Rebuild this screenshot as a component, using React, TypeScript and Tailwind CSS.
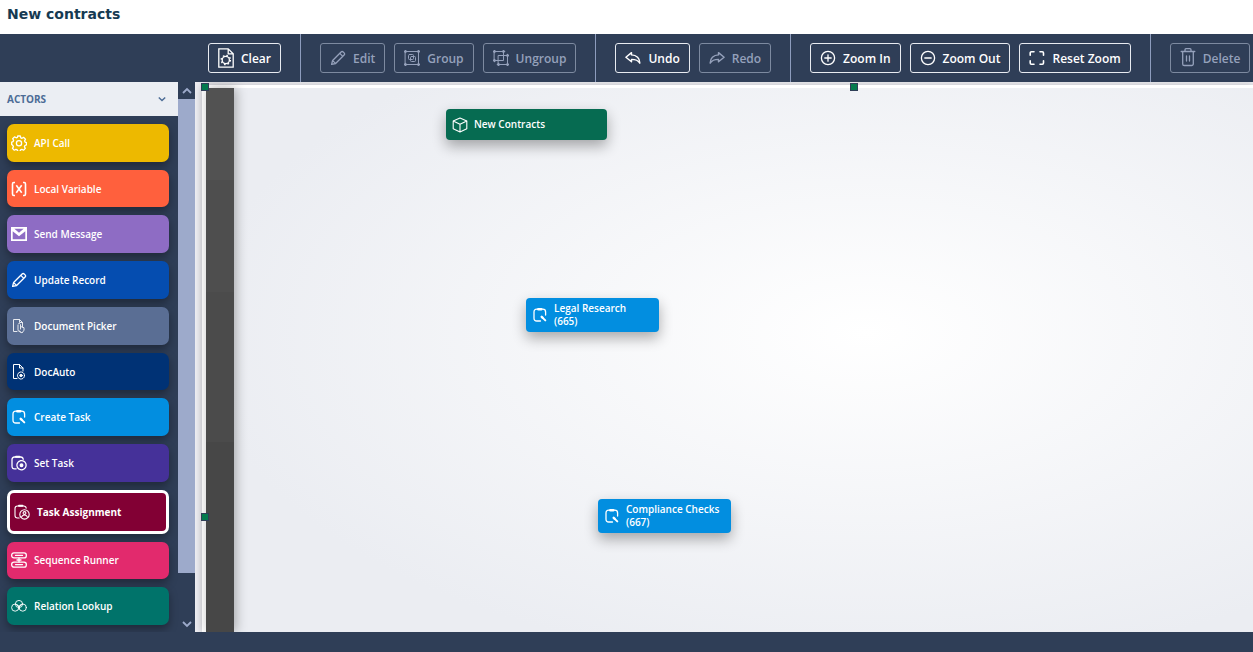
import React from "react";

type IconProps = { className?: string };

const stroke = {
  fill: "none",
  stroke: "currentColor",
  strokeWidth: 1.3,
  strokeLinecap: "round" as const,
  strokeLinejoin: "round" as const,
  "aria-hidden": true,
};

const cog =
  "M6.7 1h2.6l.5 1.8 1.2.5 1.7-.9 1.8 1.8-.9 1.7.5 1.2 1.4.5v2.3l-1.6.6-.5 1.2.9 1.7-1.8 1.8-1.7-.9-1.2.5-.5 1.7H6.7l-.5-1.7-1.2-.5-1.7.9-1.8-1.8.9-1.7-.5-1.2L.7 9.4V7.1l1.4-.5.5-1.2-.9-1.7 1.8-1.8 1.7.9 1.2-.5z";

function ClearIcon({ className }: IconProps) {
  return (
    <svg viewBox="0 0 16 20" className={className} {...stroke} strokeLinecap="butt" strokeLinejoin="miter">
      <path d="M.8.8h9.4l5 5v13.4H.8zM10.2.8v5h5" />
      <circle cx="7.8" cy="12" r="3.6" />
      <circle cx="7.8" cy="12" r="4.6" strokeWidth="1.4" strokeDasharray="1.6 2.01" />
    </svg>
  );
}

function PencilIcon({ className }: IconProps) {
  return (
    <svg viewBox="0 0 16 16" className={className} {...stroke} strokeWidth={1.3}>
      <path d="M1.6 14.4l1-3.9 8.5-8.5a1.5 1.5 0 0 1 2.1 0l.9.9a1.5 1.5 0 0 1 0 2.1l-8.5 8.5zM9.8 3.4l3 3M2.7 10.6l2.8 2.8" />
    </svg>
  );
}

function GroupIcon({ className }: IconProps) {
  return (
    <svg viewBox="0 0 16 16" className={className} {...stroke} strokeWidth={1}>
      <path d="M1.5 1.5h13v13h-13z" />
      <path d="M.5 1.5h2M1.5.5v2M13.5 1.5h2M14.5.5v2M.5 14.5h2M1.5 13.5v2M13.5 14.5h2M14.5 13.5v2" strokeWidth="1.6" />
      <rect x="4.5" y="4.5" width="5" height="5" rx="1" />
      <rect x="6.5" y="6.5" width="5" height="5" rx="1" />
    </svg>
  );
}

function UngroupIcon({ className }: IconProps) {
  return (
    <svg viewBox="0 0 16 16" className={className} {...stroke} strokeWidth={1}>
      <path d="M1.5 1.5h9v9h-9zM5.5 5.5h9v9h-9z" />
      <path d="M.5 1.5h2M1.5.5v2M9.5 1.5h2M10.5.5v2M.5 10.5h2M1.5 9.5v2M13.5 5.5h2M14.5 4.5v2M13.5 14.5h2M14.5 13.5v2M4.5 14.5h2M5.5 13.5v2" strokeWidth="1.6" />
    </svg>
  );
}

function UndoIcon({ className }: IconProps) {
  return (
    <svg viewBox="0 0 16 16" className={className} {...stroke} strokeWidth={1.4}>
      <path d="M6.5 2.6L.9 7.2l5.6 4.6V9.4c4 0 6.5.8 8.3 3.8.2-4.5-3.3-8.3-8.3-8.3z" />
    </svg>
  );
}

function RedoIcon({ className }: IconProps) {
  return (
    <svg viewBox="0 0 16 16" className={className} {...stroke} strokeWidth={1.4}>
      <path d="M9.5 2.6l5.6 4.6-5.6 4.6V9.4c-4 0-6.5.8-8.3 3.8-.2-4.5 3.3-8.3 8.3-8.3z" />
    </svg>
  );
}

function ZoomInIcon({ className }: IconProps) {
  return (
    <svg viewBox="0 0 16 16" className={className} {...stroke}>
      <circle cx="8" cy="8" r="6.6" />
      <path d="M4.8 8h6.4M8 4.8v6.4" />
    </svg>
  );
}

function ZoomOutIcon({ className }: IconProps) {
  return (
    <svg viewBox="0 0 16 16" className={className} {...stroke}>
      <circle cx="8" cy="8" r="6.6" />
      <path d="M4.8 8h6.4" />
    </svg>
  );
}

function ResetIcon({ className }: IconProps) {
  return (
    <svg viewBox="0 0 16 16" className={className} {...stroke} strokeWidth={1.6}>
      <path d="M1.2 5.3V3a1.2 1.2 0 0 1 1.2-1.2H5M11 1.8h2.3A1.2 1.2 0 0 1 14.5 3v2.3M14.5 10.7V13a1.2 1.2 0 0 1-1.2 1.2H11M5 14.2H2.4A1.2 1.2 0 0 1 1.2 13v-2.3" />
    </svg>
  );
}

function TrashIcon({ className }: IconProps) {
  return (
    <svg viewBox="0 0 16 20" className={className} {...stroke}>
      <path d="M1.2 3.5h13.6M5 3.5V1.7A1 1 0 0 1 6 .7h4a1 1 0 0 1 1 1v1.8M2.7 3.5v12.4a1.6 1.6 0 0 0 1.6 1.6h7.4a1.6 1.6 0 0 0 1.6-1.6V3.5M6.5 8v5M9.5 8v5" />
    </svg>
  );
}

function GearIcon({ className }: IconProps) {
  return (
    <svg viewBox="0 0 16 16" className={className} {...stroke} strokeWidth={1.3}>
      <path d={cog} />
      <circle cx="8" cy="8.2" r="2.6" />
    </svg>
  );
}

function VariableIcon({ className }: IconProps) {
  return (
    <svg viewBox="0 0 16 16" className={className} {...stroke} strokeWidth={1.6} strokeLinecap="butt">
      <path d="M4 1.5H2.8Q1.5 1.5 1.5 3v10q0 1.5 1.3 1.5H4M12 1.5h1.2q1.3 0 1.3 1.5v10q0 1.5-1.3 1.5H12" />
      <path d="M5.3 4.3l5.4 7.4M10.7 4.3l-5.4 7.4" />
    </svg>
  );
}

function MailIcon({ className }: IconProps) {
  return (
    <svg viewBox="0 0 16 16" className={className} aria-hidden>
      <path fillRule="evenodd" fill="currentColor" d="M0 1h16v14H0zM1.7 5.2v8h12.6v-8L8 10.2z" />
      <path fill="#8e6cc4" d="M3.4 2.7h9.2L8 6.7z" />
    </svg>
  );
}

function DocPickIcon({ className }: IconProps) {
  return (
    <svg viewBox="0 0 16 16" className={className} {...stroke} strokeWidth={1} opacity={0.85}>
      <path d="M6 13.5H2.5v-12h6l3 3V9M8.5 1.5v3h3" />
      <path d="M9.5 11V6.5Q9 5 7.6 5.6M7 7v5.5l2.5 1.8M9.5 8.5l3.5 1.2v2.500l-2 2.800-2.500-2" />
    </svg>
  );
}

function DocAutoIcon({ className }: IconProps) {
  return (
    <svg viewBox="0 0 16 16" className={className} {...stroke} strokeWidth={1}>
      <path d="M6 14.5H2.5v-14h6L12 4v3M8.5.5V4H12" />
      <circle cx="10" cy="11.5" r="3.5" strokeDasharray="1.6 .6" />
      <circle cx="10" cy="11.5" r="1.2" fill="currentColor" />
    </svg>
  );
}

function TaskIcon({ className }: IconProps) {
  return (
    <svg viewBox="0 0 16 16" className={className} {...stroke}>
      <path d="M8.5 14H4.8Q2 14 2 11.2V5q0-2.8 2.8-2.8h6Q13.6 2.2 13.6 5v3" />
      <path d="M6.3 2.2h3" strokeWidth="2.4" />
      <path d="M9.7 9.8l.8.8" strokeWidth="2.4" />
      <path d="M11 11.1l2.3 2.3" strokeWidth="2" />
    </svg>
  );
}

function SetTaskIcon({ className }: IconProps) {
  return (
    <svg viewBox="0 0 16 16" className={className} {...stroke}>
      <path d="M5.2 13.8H3.5Q1 13.8 1 11.3V4.5Q1 2 3.5 2h6.2q2.3 0 2.5 2.3" />
      <path d="M5 1.7h3.5" strokeWidth="2" />
      <circle cx="10.5" cy="10.2" r="4.6" strokeDasharray="2.4 .5" />
      <circle cx="10.5" cy="10.2" r="1.3" fill="currentColor" />
    </svg>
  );
}

function AssignIcon({ className }: IconProps) {
  return (
    <svg viewBox="0 0 16 16" className={className} {...stroke} strokeWidth={1.1}>
      <path d="M5.2 14H3.5Q1 14 1 11.5V4.5Q1 2 3.5 2h6.2q2.3 0 2.5 2.3" />
      <path d="M5 1.7h3.5" strokeWidth="2" />
      <circle cx="10.5" cy="10.4" r="4.7" />
      <circle cx="10.5" cy="9" r="1.4" />
      <path d="M7.6 13.2q.5-2.2 2.9-2.2t2.9 2.2" />
    </svg>
  );
}

function SequenceIcon({ className }: IconProps) {
  return (
    <svg viewBox="0 0 16 16" className={className} {...stroke} strokeWidth={1.3}>
      <rect x=".7" y=".9" width="14.6" height="5" rx="2.2" />
      <rect x=".7" y="10.1" width="14.6" height="5" rx="2.2" />
      <path d="M4.5 3.4h7M4.5 12.6h7M8 6v4M6 8h4" />
    </svg>
  );
}

function RelationIcon({ className }: IconProps) {
  return (
    <svg viewBox="0 0 16 16" className={className} {...stroke} strokeWidth={0.9}>
      <circle cx="8" cy="6" r="3.6" />
      <circle cx="4.2" cy="9.6" r="3.6" />
      <circle cx="11.8" cy="9.6" r="3.6" />
      <path d="M8 8.4v3M8 8.4L5.8 7M8 8.4L10.2 7" />
    </svg>
  );
}

function BoxIcon({ className }: IconProps) {
  return (
    <svg viewBox="0 0 16 16" className={className} {...stroke} strokeWidth={1.1}>
      <path d="M8 1l6.8 2.9v7.9L8 15l-6.8-3.2V3.9zM1.2 3.9L8 7.3l6.8-3.4M8 7.3V15" />
    </svg>
  );
}

function Chevron({ className, up }: IconProps & { up?: boolean }) {
  return (
    <svg viewBox="0 0 10 10" className={className} {...stroke} strokeWidth={1.8} strokeLinecap="butt" strokeLinejoin="miter">
      <path d={up ? "M1 7l4-4 4 4" : "M1 3l4 4 4-4"} />
    </svg>
  );
}

type Tool = { label: string; Icon: (p: IconProps) => React.JSX.Element; off?: boolean; tall?: boolean };

const toolGroups: Tool[][] = [
  [{ label: "Clear", Icon: ClearIcon, tall: true }],
  [
    { label: "Edit", Icon: PencilIcon, off: true },
    { label: "Group", Icon: GroupIcon, off: true },
    { label: "Ungroup", Icon: UngroupIcon, off: true },
  ],
  [
    { label: "Undo", Icon: UndoIcon },
    { label: "Redo", Icon: RedoIcon, off: true },
  ],
  [
    { label: "Zoom In", Icon: ZoomInIcon },
    { label: "Zoom Out", Icon: ZoomOutIcon },
    { label: "Reset Zoom", Icon: ResetIcon },
  ],
  [{ label: "Delete", Icon: TrashIcon, off: true, tall: true }],
];

const actors = [
  { label: "API Call", Icon: GearIcon, color: "bg-[#edb900]" },
  { label: "Local Variable", Icon: VariableIcon, color: "bg-[#ff603d]" },
  { label: "Send Message", Icon: MailIcon, color: "bg-[#8e6cc4]" },
  { label: "Update Record", Icon: PencilIcon, color: "bg-[#054db0]" },
  { label: "Document Picker", Icon: DocPickIcon, color: "bg-[#5a6e94]" },
  { label: "DocAuto", Icon: DocAutoIcon, color: "bg-[#003275]" },
  { label: "Create Task", Icon: TaskIcon, color: "bg-[#028ee0]" },
  { label: "Set Task", Icon: SetTaskIcon, color: "bg-[#453199]" },
  { label: "Task Assignment", Icon: AssignIcon, color: "bg-[#820034]", selected: true },
  { label: "Sequence Runner", Icon: SequenceIcon, color: "bg-[#e22a6d]" },
  { label: "Relation Lookup", Icon: RelationIcon, color: "bg-[#00736a]" },
];

const nodes = [
  { label: "New Contracts", Icon: BoxIcon, style: "left-[251px] top-[27px] h-[31px] w-[161px] bg-[#066b51]" },
  { label: "Legal Research", id: "(665)", Icon: TaskIcon, style: "left-[331px] top-[216px] h-[34px] w-[133px] bg-[#028ee0]" },
  { label: "Compliance Checks", id: "(667)", Icon: TaskIcon, style: "left-[403px] top-[417px] h-[34px] w-[133px] bg-[#028ee0]" },
];

const handles = ["left-[6px] top-px", "left-[655px] top-px", "left-[6px] top-[431px]"];

function Toolbar() {
  return (
    <div role="toolbar" className="flex h-12 shrink-0 bg-[#2f3e57] pl-[189px]">
      {toolGroups.map((group, i) => (
        <div
          key={i}
          className="flex shrink-0 items-center gap-[9px] border-r border-[#8d9cbd] px-[19px] last:border-r-0 last:pr-0"
        >
          {group.map(({ label, Icon, off, tall }) => (
            <button
              key={label}
              type="button"
              disabled={off}
              className={`flex h-[30px] items-center gap-[7px] whitespace-nowrap rounded-[3px] border px-[9px] text-[12px] leading-[19px] font-semibold ${
                off ? "border-[#7d8aa0] text-[#95a1bb]" : "border-[#e8ebf1] text-white"
              }`}
            >
              <Icon className={tall ? "h-5 w-4" : "size-4"} />
              {label}
            </button>
          ))}
        </div>
      ))}
    </div>
  );
}

function Sidebar() {
  return (
    <aside className="flex w-[195px] shrink-0 bg-[#2f3e57]">
      <div className="flex min-w-0 flex-1 flex-col">
        <button
          type="button"
          aria-expanded="true"
          className="flex h-[34px] shrink-0 items-center justify-between bg-[#ebeef3] pl-[7px] pr-3 text-[10px] font-bold text-[#4c6c96]"
        >
          ACTORS
          <Chevron className="size-2" />
        </button>
        <ul className="flex flex-1 flex-col gap-2 pb-[7px] pl-[7px] pr-[9px] pt-2">
          {actors.map(({ label, Icon, color, selected }) => (
            <li key={label} className="flex grow">
              <button
                type="button"
                aria-pressed={!!selected}
                className={`flex flex-1 items-center gap-[7px] rounded-[7px] pl-1 text-left text-[10px] leading-4 text-white shadow-[0_4px_8px_rgba(0,0,0,0.35)] ${color} ${
                  selected ? "min-h-9 border-[3px] border-white font-bold" : "min-h-[30px] font-semibold"
                }`}
              >
                <Icon className="size-4 shrink-0" />
                {label}
              </button>
            </li>
          ))}
        </ul>
      </div>
      <div className="flex w-[17px] shrink-0 flex-col items-center text-[#9daacb]">
        <span className="flex h-[17px] items-center">
          <Chevron up className="size-[10px]" />
        </span>
        <span className="w-full grow bg-[#9daacb]" />
        <span className="flex h-[59px] items-end pb-[3px]">
          <Chevron className="size-[10px]" />
        </span>
      </div>
    </aside>
  );
}

function Canvas() {
  return (
    <main className="relative flex flex-1 overflow-hidden bg-[#ededf2] pl-[7px] pt-[3px]">
      <div className="flex flex-1 border-l-4 border-t-[3px] border-white bg-[radial-gradient(64%_62%_at_63%_45%,#ffffff_0%,#ebedf2_100%)] shadow-[0_0_8px_rgba(0,0,0,0.2)]">
        <div className="w-7 bg-[linear-gradient(#525252_92px,#4e4e4e_92px,#4e4e4e_204px,#4b4b4b_204px,#4b4b4b_354px,#474747_354px)] shadow-[2px_0_12px_rgba(0,0,0,0.3)]" />
      </div>
      {handles.map((place) => (
        <span key={place} className={`absolute size-2 border border-[#2f3e57] bg-[#047a4e] ${place}`} />
      ))}
      {nodes.map(({ label, id, Icon, style }) => (
        <div
          key={label}
          className={`absolute flex items-center gap-[6px] rounded-[4px] pl-[6px] text-[10px] leading-[13px] font-semibold text-white shadow-[0_6px_14px_rgba(0,0,0,0.32)] ${style}`}
        >
          <Icon className="size-4 shrink-0" />
          <span>
            {label}
            {id && <span className="block">{id}</span>}
          </span>
        </div>
      ))}
    </main>
  );
}

export default function App() {
  return (
    <div className="flex min-h-screen flex-col overflow-hidden bg-white font-['Open_Sans',sans-serif]">
      <header className="flex h-[34px] shrink-0 items-center pb-[6px] pl-[7px]">
        <h1 className="font-['DejaVu_Sans',sans-serif] text-[14px] font-bold leading-5 text-[#163a52]">New contracts</h1>
      </header>
      <Toolbar />
      <div className="flex flex-1">
        <Sidebar />
        <Canvas />
      </div>
      <footer className="h-5 shrink-0 bg-[#2f3e57]" />
    </div>
  );
}
